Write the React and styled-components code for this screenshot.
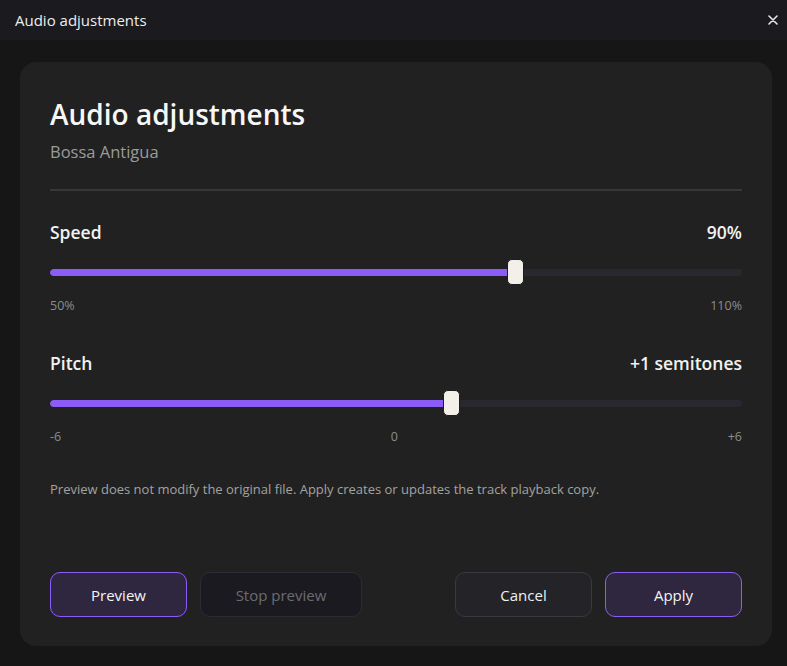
import React from 'react';
import styled, { createGlobalStyle } from 'styled-components';

const Global = createGlobalStyle`
  html, body {
    margin: 0;
    padding: 0;
    background: #161616;
    font-family: "Open Sans", "Noto Sans", sans-serif;
    color: #f2f2f2;
  }
`;

const Window = styled.div`
  width: 787px;
  height: 666px;
  display: flex;
  flex-direction: column;
  background: #161616;
  overflow: hidden;
`;

const TitleBar = styled.div`
  height: 40px;
  flex-shrink: 0;
  display: flex;
  align-items: center;
  justify-content: space-between;
  padding: 0 6px 0 15px;
  background: #1a1a1f;
  font-size: 15px;
  color: #ededed;
`;

const CloseButton = styled.button`
  width: 16px;
  height: 16px;
  padding: 0;
  border: none;
  background: none;
  display: flex;
  align-items: center;
  justify-content: center;
  cursor: pointer;
`;

const Body = styled.div`
  flex: 1;
  padding: 22px 15px 0 20px;
`;

const Card = styled.div`
  height: 584px;
  box-sizing: border-box;
  background: #212121;
  border-radius: 16px;
  padding: 35px 30px 29px 30px;
  display: flex;
  flex-direction: column;
`;

const Heading = styled.h1`
  margin: 0;
  font-size: 28px;
  line-height: 34px;
  font-weight: 600;
  color: #f7f7f7;
`;

const Subtitle = styled.div`
  margin-top: 10px;
  font-size: 16.5px;
  line-height: 22px;
  color: #9b9b9b;
`;

const Divider = styled.hr`
  margin: 26px 0 0 0;
  border: none;
  height: 2px;
  background: #37373b;
`;

const Section = styled.div`
  margin-top: ${(p) => p.$top}px;
  display: flex;
  flex-direction: column;
`;

const LabelRow = styled.div`
  display: flex;
  justify-content: space-between;
  align-items: center;
  font-size: 17.5px;
  line-height: 24px;
  font-weight: 600;
  color: #f2f2f2;
`;

const SliderWrap = styled.div`
  position: relative;
  margin-top: 15px;
  height: 26px;
  display: flex;
  align-items: center;
`;

const Track = styled.div`
  width: 100%;
  height: 7px;
  border-radius: 4px;
  background: #29282f;
  overflow: hidden;
`;

const Fill = styled.div`
  height: 100%;
  border-radius: 4px;
  background: #8b5cf6;
`;

const Thumb = styled.div`
  position: absolute;
  top: 0;
  width: 15px;
  height: 24px;
  margin-left: -8px;
  border-radius: 5px;
  background: #f3f0ea;
  border: 1px solid #1d1d1d;
`;

const Scale = styled.div`
  margin-top: 13px;
  display: flex;
  justify-content: space-between;
  font-size: 12.5px;
  line-height: 16px;
  color: #8c8c8c;
`;

const Note = styled.p`
  margin: 35px 0 0 0;
  font-size: 13px;
  line-height: 18px;
  color: #a3a3a3;
`;

const Actions = styled.div`
  margin-top: auto;
  display: flex;
  justify-content: space-between;
`;

const Group = styled.div`
  display: flex;
  gap: 13px;
`;

const variants = {
  primary: { bg: '#2f2740', border: '#8b5cf6', color: '#f4f4f4' },
  muted: { bg: '#1b1a20', border: '#2d2c32', color: '#6c6c70' },
  plain: { bg: '#232328', border: '#3a393f', color: '#f0f0f0' },
};

const Button = styled.button`
  width: ${(p) => p.$width || 137}px;
  height: 45px;
  border-radius: 10px;
  font-family: inherit;
  font-size: 15px;
  background: ${(p) => variants[p.$variant].bg};
  border: 1.5px solid ${(p) => variants[p.$variant].border};
  color: ${(p) => variants[p.$variant].color};
  cursor: pointer;
`;

function Slider({ value, min, max }) {
  const pct = ((value - min) / (max - min)) * 100;
  return (
    <SliderWrap>
      <Track>
        <Fill style={{ width: `${pct}%` }} />
      </Track>
      <Thumb style={{ left: `${pct}%` }} />
    </SliderWrap>
  );
}

export default function App() {
  return (
    <Window>
      <Global />
      <TitleBar>
        <span>Audio adjustments</span>
        <CloseButton aria-label="Close">
          <svg width="10" height="10" viewBox="0 0 10 10">
            <path d="M1 1L9 9M9 1L1 9" stroke="#e8e8e8" strokeWidth="1.6" strokeLinecap="round" />
          </svg>
        </CloseButton>
      </TitleBar>
      <Body>
        <Card>
          <Heading>Audio adjustments</Heading>
          <Subtitle>Bossa Antigua</Subtitle>
          <Divider />

          <Section $top={29}>
            <LabelRow>
              <span>Speed</span>
              <span>90%</span>
            </LabelRow>
            <Slider value={90.3} min={50} max={110} />
            <Scale>
              <span>50%</span>
              <span>110%</span>
            </Scale>
          </Section>

          <Section $top={37}>
            <LabelRow>
              <span>Pitch</span>
              <span>+1 semitones</span>
            </LabelRow>
            <Slider value={0.95} min={-6} max={6} />
            <Scale>
              <span>-6</span>
              <span>0</span>
              <span>+6</span>
            </Scale>
          </Section>

          <Note>Preview does not modify the original file. Apply creates or updates the track playback copy.</Note>

          <Actions>
            <Group>
              <Button $variant="primary">Preview</Button>
              <Button $variant="muted" $width={162}>Stop preview</Button>
            </Group>
            <Group>
              <Button $variant="plain">Cancel</Button>
              <Button $variant="primary">Apply</Button>
            </Group>
          </Actions>
        </Card>
      </Body>
    </Window>
  );
}
